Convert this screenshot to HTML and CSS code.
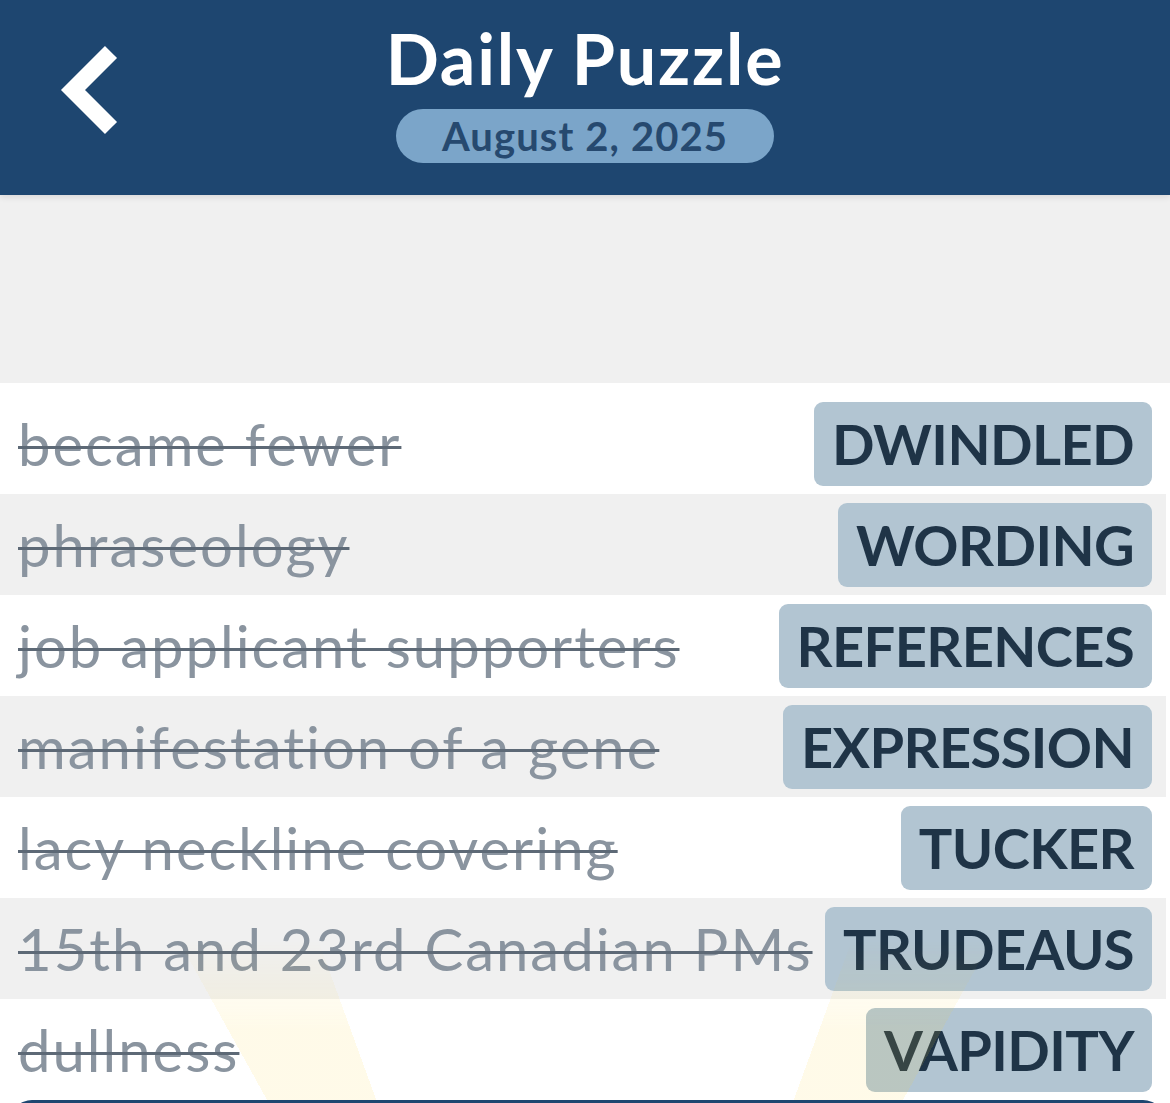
FILE: index.html
```html
<!DOCTYPE html>
<html lang="en">
<head>
    <meta charset="UTF-8">
    <meta name="viewport" content="width=device-width, initial-scale=1.0">
    <title>Daily Puzzle</title>
    <link rel="stylesheet" href="styles.css">
</head>
<body>

    <header class="topbar">
        <a class="back" href="#" aria-label="back">
            <svg width="64" height="96" viewBox="0 0 64 96">
                <polyline points="52,10 14,48 52,86" fill="none" stroke="#fff" stroke-width="17" stroke-linejoin="miter" />
            </svg>
        </a>
        <div class="heading">
            <h1>Daily Puzzle</h1>
            <span class="date">August 2, 2025</span>
        </div>
        <div></div>
    </header>

    <section class="banner"></section>

    <ul class="answers">
        <li class="answer"><span class="clue">became fewer</span><span class="word">DWINDLED</span></li>
        <li class="answer"><span class="clue">phraseology</span><span class="word">WORDING</span></li>
        <li class="answer"><span class="clue">job applicant supporters</span><span class="word">REFERENCES</span></li>
        <li class="answer"><span class="clue">manifestation of a gene</span><span class="word">EXPRESSION</span></li>
        <li class="answer"><span class="clue">lacy neckline covering</span><span class="word">TUCKER</span></li>
        <li class="answer"><span class="clue">15th and 23rd Canadian PMs</span><span class="word">TRUDEAUS</span></li>
        <li class="answer"><span class="clue">dullness</span><span class="word">VAPIDITY</span></li>
    </ul>

    <!-- glow from the finish panel -->
    <div class="rays"></div>

    <footer class="dock"></footer>

</body>
</html>
```

FILE: styles.css
```css
body {
    margin: 0;
    height: 1103px;
    overflow: hidden;
    position: relative;
    background: #fff;
    font-family: Lato, "Noto Sans", sans-serif;
}

.topbar {
    height: 195px;
    box-sizing: border-box;
    padding-top: 18px;
    background-color: #1e4670;
    display: grid;
    grid-template-columns: 1fr auto 1fr;
    position: relative;
    z-index: 2;
    box-shadow: 0 2px 6px rgba(60, 30, 40, 0.12);
}

.back {
    display: block;
    width: 64px;
    height: 96px;
    margin-left: 59px;
    margin-top: 24px;
}

.heading {
    display: flex;
    flex-direction: column;
    align-items: center;
}

.heading h1 {
    margin: 0;
    font-size: 70px;
    line-height: 80px;
    font-weight: 700;
    letter-spacing: 1.8px;
    color: #fff;
}

.date {
    margin-top: 11px;
    height: 54px;
    line-height: 54px;
    padding: 0 46px;
    border-radius: 27px;
    background-color: #7ba5c9;
    color: #26496f;
    font-size: 40px;
    font-weight: 700;
    letter-spacing: 1.1px;
}

.banner {
    height: 188px;
    background-color: #f0f0f0;
}

.answers {
    list-style: none;
    margin: 0;
    padding: 10px 0 0 0;
    width: 1166px;
}

.answer {
    height: 101px;
    display: flex;
    align-items: center;
    justify-content: space-between;
    padding: 0 14px 0 18px;
}

.answer:nth-child(even) {
    background-color: #f0f0f0;
}

.clue {
    font-size: 58px;
    letter-spacing: 2px;
    color: #8a949f;
    white-space: nowrap;
    text-decoration: line-through;
    text-decoration-color: #5d6976;
    text-decoration-thickness: 3px;
}

.word {
    height: 84px;
    line-height: 84px;
    padding: 0 18px;
    border-radius: 9px;
    background-color: #b2c5d2;
    color: #1f3447;
    font-size: 56px;
    font-weight: 700;
    letter-spacing: -0.6px;
    white-space: nowrap;
}

/* two soft beams rising from below the dock */
.rays {
    position: absolute;
    left: 0;
    right: 0;
    top: 940px;
    height: 163px;
    pointer-events: none;
    background: conic-gradient(from 0deg at 50% 450%,
        rgba(255, 212, 50, 0) 0deg 20deg,
        rgba(255, 212, 50, 0.11) 20deg 29deg,
        rgba(255, 212, 50, 0) 29deg 331deg,
        rgba(255, 212, 50, 0.11) 331deg 340deg,
        rgba(255, 212, 50, 0) 340deg);
    -webkit-mask-image: linear-gradient(to bottom, transparent 0%, #000 55%);
    mask-image: linear-gradient(to bottom, transparent 0%, #000 55%);
}

.dock {
    position: absolute;
    left: 10px;
    right: 5px;
    top: 1100px;
    height: 80px;
    background-color: #1e4670;
    border-radius: 22px 22px 0 0;
}
```
